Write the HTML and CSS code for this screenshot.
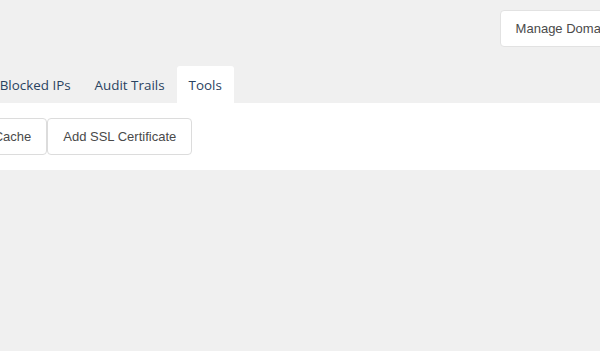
FILE: index.html
```html
<!DOCTYPE html>
<html>
<head>
  <title>Site Tools</title>
  <meta name="viewport" content="width=device-width, initial-scale=1.0">
  <link rel="stylesheet" href="styles.css">
</head>
<body>

  <div class="page">
    <header class="top-bar">
      <a href="#" class="btn">Manage Domain</a>
    </header>

    <nav class="tabs">
      <a href="#" class="tab">Logs</a>
      <a href="#" class="tab">Blocked IPs</a>
      <a href="#" class="tab">Audit Trails</a>
      <a href="#" class="tab active">Tools</a>
    </nav>

    <div class="panel">
      <a href="#" class="btn">Clear Cache</a>
      <a href="#" class="btn">Add SSL Certificate</a>
    </div>
  </div>

</body>
</html>
```

FILE: styles.css
```css
* {
  margin: 0;
  padding: 0;
  box-sizing: border-box;
}

html, body {
  height: 100%;
  background-color: #f0f0f0;
  overflow: hidden;
}

.page {
  width: 710px;
  margin-left: -72px;
}

.top-bar {
  display: flex;
  justify-content: flex-end;
  padding: 10px 11px 19px 0;
}

.btn {
  display: inline-block;
  padding: 10px 15px;
  background-color: #fff;
  border: 1px solid #e2e2e2;
  border-radius: 4px;
  color: #4a4a4a;
  text-decoration: none;
  font-family: "Liberation Sans", Arial, sans-serif;
  font-size: 13px;
  line-height: 15px;
}

.tabs {
  display: flex;
  padding-left: 7px;
}

.tab {
  padding: 0 12px;
  height: 37px;
  line-height: 38px;
  font-family: "Open Sans", sans-serif;
  font-size: 13.4px;
  color: #2a4361;
  text-decoration: none;
  border-radius: 3px 3px 0 0;
}

.tab.active {
  background-color: #fff;
}

.panel {
  display: flex;
  padding: 15px;
  background-color: #fff;
}

.panel .btn {
  border-color: #dcdcdc;
}
```
